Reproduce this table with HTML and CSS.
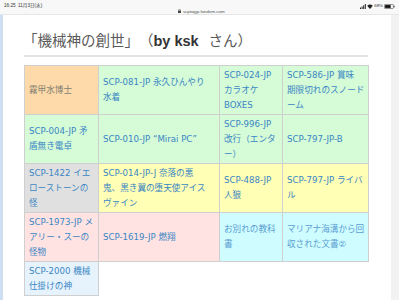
FILE: index.html
```html
<!DOCTYPE html>
<html lang="ja">
<head>
<meta charset="utf-8">
<title>機械神の創世</title>
<link rel="stylesheet" href="styles.css">
</head>
<body>
<div class="screen">
  <div class="status">
    <div class="status-top">
      <span class="time">16:25&nbsp;&nbsp;11月3日(水)</span>
      <span class="sys">
        <svg class="signal" width="6" height="5" viewBox="0 0 6 5"><rect x="0" y="3.5" width="1" height="1.5" fill="#222"/><rect x="1.6" y="2.5" width="1" height="2.5" fill="#222"/><rect x="3.2" y="1.3" width="1" height="3.7" fill="#222"/><rect x="4.8" y="0" width="1" height="5" fill="#222"/></svg>
        <svg class="wifi" width="6" height="5" viewBox="0 0 6 5"><path d="M0.2 1.8 A4 4 0 0 1 5.8 1.8 L3 5 Z" fill="#222"/></svg>
        <span class="pct">68%</span>
        <svg class="battery" width="11" height="5" viewBox="0 0 11 5"><rect x="0.4" y="0.4" width="9" height="4.2" rx="1" fill="none" stroke="#555" stroke-width="0.7"/><rect x="1.1" y="1.1" width="5.6" height="2.8" fill="#111"/><rect x="9.8" y="1.6" width="0.9" height="1.8" fill="#555"/></svg>
      </span>
    </div>
    <div class="url"><svg class="lock" width="3" height="4" viewBox="0 0 3 4"><rect x="0" y="1.6" width="3" height="2.4" fill="#444"/><path d="M0.6 1.8 V1.2 A0.9 0.9 0 0 1 2.4 1.2 V1.8" fill="none" stroke="#444" stroke-width="0.5"/></svg>scptogjp.fandom.com</div>
  </div>
  <div class="page">
    <div class="rail"></div>
    <main class="content">
      <h1 class="title">「機械神の創世」（<b class="author">by ksk</b>&nbsp;&nbsp;&nbsp;さん）</h1>
      <div class="rule"></div>
      <table class="grid">
        <colgroup>
          <col class="c1"><col class="c2"><col class="c3"><col class="c4">
        </colgroup>
        <tr>
          <td class="orange plain">霧甲水博士</td>
          <td class="green">SCP-081-JP 永久ひんやり<br>水着</td>
          <td class="green">SCP-024-JP<br>カラオケ<br>BOXES</td>
          <td class="green">SCP-586-JP 賞味<br>期限切れのスノード<br>ーム</td>
        </tr>
        <tr>
          <td class="green">SCP-004-JP 矛<br>盾無き電卓</td>
          <td class="green">SCP-010-JP “Mirai PC”</td>
          <td class="green">SCP-996-JP<br>改行（エンタ<br>ー）</td>
          <td class="green">SCP-797-JP-B</td>
        </tr>
        <tr>
          <td class="grey">SCP-1422 イエ<br>ローストーンの<br>怪</td>
          <td class="yellow">SCP-014-JP-J 奈落の悪<br>鬼、黒き翼の堕天使アイス<br>ヴァイン</td>
          <td class="yellow">SCP-488-JP<br>人狼</td>
          <td class="yellow">SCP-797-JP ライバ<br>ル</td>
        </tr>
        <tr>
          <td class="pink">SCP-1973-JP メ<br>アリー・スーの<br>怪物</td>
          <td class="pink">SCP-1619-JP 燃翔</td>
          <td class="cyan light">お別れの教科<br>書</td>
          <td class="cyan light">マリアナ海溝から回<br>収された文書②</td>
        </tr>
        <tr>
          <td class="blue">SCP-2000 機械<br>仕掛けの神</td>
        </tr>
      </table>
    </main>
    <div class="gutter"></div>
  </div>
</div>
</body>
</html>
```
FILE: styles.css
```css
html, body {
  margin: 0;
  padding: 0;
  background: #ffffff;
}
.screen {
  width: 399px;
  height: 300px;
  overflow: hidden;
  display: flex;
  flex-direction: column;
  font-family: "Noto Sans CJK JP", sans-serif;
  text-spacing-trim: space-all;
}
.status {
  height: 15px;
  box-sizing: border-box;
  background: #f8f8f8;
  border-bottom: 1px solid #e6e6e6;
  padding: 3px 4px 0 4px;
}
.status-top {
  display: flex;
  justify-content: space-between;
  align-items: center;
  height: 6px;
}
.time {
  font-size: 4.6px;
  line-height: 6px;
  color: #333;
  font-family: "Liberation Sans", "Noto Sans CJK JP", sans-serif;
}
.sys {
  display: flex;
  align-items: center;
  gap: 1px;
}
.pct {
  font-size: 4.4px;
  line-height: 6px;
  color: #333;
  font-family: "Liberation Sans", sans-serif;
}
.url {
  display: flex;
  justify-content: center;
  align-items: center;
  gap: 1.5px;
  font-size: 4.4px;
  line-height: 5px;
  color: #555;
  font-family: "Liberation Sans", sans-serif;
  margin-top: -0.5px;
  padding-left: 4px;
}
.page {
  flex: 1;
  display: flex;
}
.rail {
  width: 3px;
  background: #cddff0;
}
.gutter {
  width: 8px;
  background: #f2f2f2;
}
.content {
  flex: 1;
  padding-left: 21px;
}
.title {
  margin: 15px 0 0 -1px;
  font-size: 14.5px;
  line-height: 20px;
  font-weight: normal;
  color: #5a5a5a;
  white-space: nowrap;
  text-spacing-trim: space-all;
}
.author {
  font-family: "Liberation Sans", sans-serif;
  font-weight: bold;
  color: #333;
}
.rule {
  width: 344px;
  height: 2px;
  background: #e3e3e3;
  margin-top: 4px;
}
.grid {
  margin-top: 8px;
  width: 344px;
  table-layout: fixed;
  border-collapse: collapse;
  font-family: "DejaVu Sans", "Noto Sans CJK JP", sans-serif;
  font-size: 8.6px;
  line-height: 15px;
}
.c1 { width: 74px; }
.c2 { width: 121px; }
.c3 { width: 63px; }
.c4 { width: 86px; }
.grid td {
  border: 1px solid #cfcfcf;
  padding: 1.5px 1px 1.5px 4px;
  vertical-align: middle;
  white-space: nowrap;
  overflow: hidden;
  color: #3a86c4;
}
.grid td.plain { color: #7f7f72; }
.grid td.light { color: #5b9dd2; }
.orange { background: #fed9a9; }
.green { background: #d5fbd7; }
.grey { background: #e0e0e0; }
.yellow { background: #ffffb5; }
.pink { background: #ffe2e2; }
.cyan { background: #cefcff; }
.blue { background: #e7f3fc; }
```
